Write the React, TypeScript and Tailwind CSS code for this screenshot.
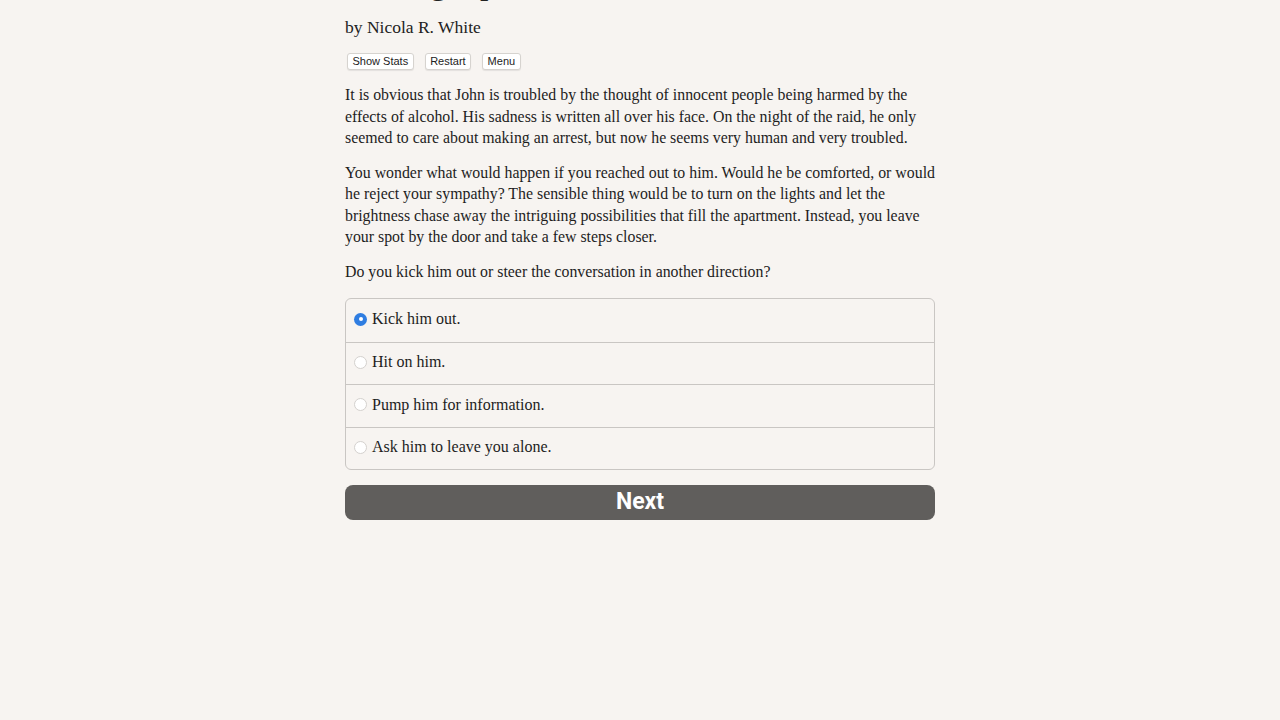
const options = [
  'Kick him out.',
  'Hit on him.',
  'Pump him for information.',
  'Ask him to leave you alone.',
];

const serif = { fontFamily: '"Palatino Linotype", "Book Antiqua", Palatino, "Liberation Serif", serif' };

export default function App() {
  const selected = 0;

  return (
    <div className="min-h-[720px] w-full overflow-hidden bg-[#f7f4f1] text-[#1d1d1d]" style={serif}>
      <div className="mx-auto w-[590px]">
        {/* Title, scrolled mostly off the top */}
        <h1 className="-mt-[35px] h-[36px] text-[34px] leading-[36px] text-[#222]">Jazzing Up</h1>

        <p className="mt-[14px] text-[17.5px] leading-[24px] text-[#222]">by Nicola R. White</p>

        <div className="mt-[14px] flex gap-[11px] pl-[2px]" style={{ fontFamily: '"Liberation Sans", Arial, sans-serif' }}>
          {['Show Stats', 'Restart', 'Menu'].map((b) => (
            <button
              key={b}
              className="h-[17px] rounded-[3px] border border-[#d6d3cf] bg-white px-[4.5px] text-[11px] leading-[15px] text-[#222] shadow-[0_1px_1px_rgba(0,0,0,0.08)]"
            >
              {b}
            </button>
          ))}
        </div>

        <div className="mt-[14px] space-y-[13px] whitespace-nowrap text-[15.85px] leading-[21.5px]">
          <p>
            It is obvious that John is troubled by the thought of innocent people being harmed by the
            <br />
            effects of alcohol. His sadness is written all over his face. On the night of the raid, he only
            <br />
            seemed to care about making an arrest, but now he seems very human and very troubled.
          </p>
          <p>
            You wonder what would happen if you reached out to him. Would he be comforted, or would
            <br />
            he reject your sympathy? The sensible thing would be to turn on the lights and let the
            <br />
            brightness chase away the intriguing possibilities that fill the apartment. Instead, you leave
            <br />
            your spot by the door and take a few steps closer.
          </p>
          <p>Do you kick him out or steer the conversation in another direction?</p>
        </div>

        <div className="mt-[16px] overflow-hidden rounded-[6px] border border-[#c9c6c3]">
          {options.map((o, i) => (
            <label
              key={o}
              className={`flex h-[42.5px] items-center gap-[5px] pb-[2px] pl-[8px] text-[16px] ${i > 0 ? 'border-t border-[#c9c6c3]' : ''}`}
            >
              {i === selected ? (
                <span className="flex h-[13px] w-[13px] items-center justify-center rounded-full bg-[#2f7de1]">
                  <span className="h-[4px] w-[4px] rounded-full bg-white" />
                </span>
              ) : (
                <span className="h-[13px] w-[13px] rounded-full border border-[#d4d1ce] bg-white" />
              )}
              <span>{o}</span>
            </label>
          ))}
        </div>

        <button
          className="mt-[15px] flex h-[35px] w-full items-center justify-center rounded-[8px] bg-[#605e5c] text-[23px] font-bold text-white"
          style={{ fontFamily: 'Roboto, "Liberation Sans", sans-serif' }}
        >
          Next
        </button>
      </div>
    </div>
  );
}
